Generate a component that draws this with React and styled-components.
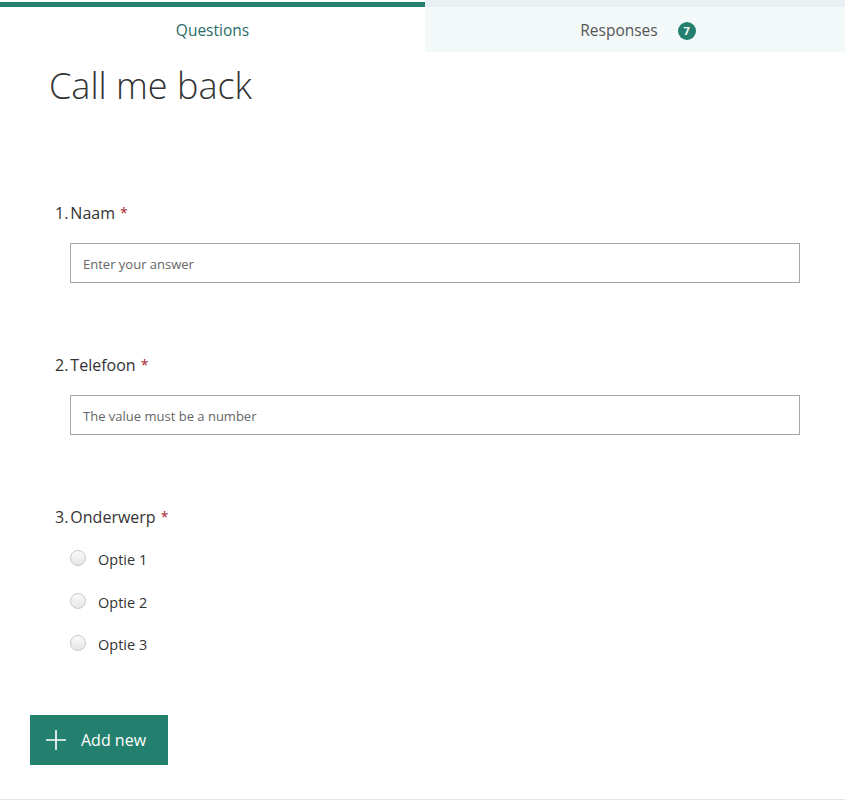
import React from "react";
import styled, { createGlobalStyle } from "styled-components";

const GlobalStyle = createGlobalStyle`
  html, body { margin: 0; padding: 0; background: #fff; }
  body { font-family: "Open Sans", "Noto Sans", Arial, sans-serif; color: #333; }
  * { box-sizing: border-box; }
`;

const GREEN = "#23806f";

const Page = styled.div`
  width: 845px;
  height: 800px;
  border-bottom: 1px solid #dfe6e8;
  display: flex;
  flex-direction: column;
`;

const TabBar = styled.div`
  display: flex;
  height: 52px;
  flex: 0 0 52px;
`;

const Tab = styled.div`
  flex: ${(p) => (p.$active ? "0 0 425px" : "1 1 auto")};
  display: flex;
  align-items: center;
  justify-content: center;
  gap: 20px;
  font-size: 15.5px;
  color: ${(p) => (p.$active ? "#2b6c67" : "#555")};
  background: ${(p) => (p.$active ? "#fff" : "#f3f8f9")};
  margin-top: ${(p) => (p.$active ? "2px" : "0")};
  border-top: ${(p) => (p.$active ? `5px solid ${GREEN}` : "7px solid #e8f0f3")};
  padding-left: ${(p) => (p.$active ? "0" : "6px")};
`;

const Badge = styled.span`
  width: 18px;
  height: 18px;
  border-radius: 50%;
  background: ${GREEN};
  color: #fff;
  font-size: 11px;
  font-weight: 700;
  display: inline-flex;
  align-items: center;
  justify-content: center;
  margin-top: 2px;
`;

const Content = styled.div`
  padding: 12px 45px 0 49px;
`;

const Title = styled.h1`
  margin: 0;
  font-size: 36px;
  line-height: 44px;
  font-weight: 300;
  color: #333;
`;

const Questions = styled.div`
  margin-top: 94px;
  padding-left: 6px;
  display: flex;
  flex-direction: column;
  gap: 71px;
`;

const Question = styled.div`
  display: flex;
  flex-direction: column;
`;

const Label = styled.div`
  font-size: 16px;
  line-height: 22px;
  height: 22px;
  color: #333;
  display: flex;
  gap: 2px;
`;

const Star = styled.span`
  color: #a4262c;
  font-size: 14px;
  line-height: 14px;
  margin-left: 5px;
  vertical-align: 1px;
`;

const Input = styled.div`
  margin: 19px 0 0 15px;
  height: 40px;
  border: 1px solid #a6a6a6;
  display: flex;
  align-items: center;
  padding-left: 12px;
  padding-top: 1px;
  font-size: 13px;
  color: #666;
`;

const Options = styled.div`
  margin: 10px 0 0 15px;
  display: flex;
  flex-direction: column;
`;

const Option = styled.div`
  height: 42.7px;
  display: flex;
  align-items: center;
  gap: 12px;
  font-size: 14.5px;
  color: #333;
`;

const Radio = styled.span`
  width: 16px;
  height: 16px;
  border-radius: 50%;
  border: 1px solid #c8c8c8;
  background: linear-gradient(#fafafa, #e6e6e6);
  margin-top: -3px;
`;

const AddButton = styled.button`
  margin: 49px 0 0 30px;
  width: 138px;
  height: 50px;
  flex: 0 0 50px;
  border: none;
  background: ${GREEN};
  color: #fff;
  font-family: inherit;
  font-size: 16px;
  display: flex;
  align-items: center;
  gap: 15px;
  padding: 0 0 0 16px;
  cursor: pointer;
`;

const questions = [
  { n: 1, label: "Naam", type: "text", placeholder: "Enter your answer" },
  { n: 2, label: "Telefoon", type: "text", placeholder: "The value must be a number" },
  { n: 3, label: "Onderwerp", type: "choice", options: ["Optie 1", "Optie 2", "Optie 3"] },
];

export default function App() {
  return (
    <>
      <GlobalStyle />
      <Page>
        <TabBar>
          <Tab $active>Questions</Tab>
          <Tab>
            <span>Responses</span>
            <Badge>7</Badge>
          </Tab>
        </TabBar>
        <Content>
          <Title>Call me back</Title>
          <Questions>
            {questions.map((q) => (
              <Question key={q.n}>
                <Label>
                  <span>{q.n}.</span>
                  <span>
                    {q.label}
                    <Star>*</Star>
                  </span>
                </Label>
                {q.type === "text" ? (
                  <Input>{q.placeholder}</Input>
                ) : (
                  <Options>
                    {q.options.map((o) => (
                      <Option key={o}>
                        <Radio />
                        {o}
                      </Option>
                    ))}
                  </Options>
                )}
              </Question>
            ))}
          </Questions>
        </Content>
        <AddButton>
          <svg width="20" height="20" viewBox="0 0 20 20" fill="none" stroke="#fff" strokeWidth="1.6">
            <path d="M10 0v20M0 10h20" />
          </svg>
          Add new
        </AddButton>
      </Page>
    </>
  );
}
